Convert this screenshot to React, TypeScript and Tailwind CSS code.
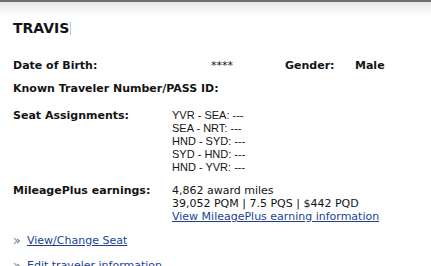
const seats = ["YVR - SEA: ---", "SEA - NRT: ---", "HND - SYD: ---", "SYD - HND: ---", "HND - YVR: ---"];

const Arrow = () => (
  <svg width="9" height="8" viewBox="0 0 9 8" className="shrink-0">
    <path d="M1 1 L4 4 L1 7" fill="none" stroke="#9a9fae" strokeWidth="1.1" />
    <path d="M4 2 L6.5 4 L4 6" fill="none" stroke="#7d8396" strokeWidth="1.1" />
  </svg>
);

export default function App() {
  return (
    <div className="w-[431px] h-[266px] overflow-hidden bg-white text-[#141414] font-['DejaVu_Sans',Verdana,sans-serif] text-[11px]">
      <div className="h-[2px] bg-[#6e6e6e]" />
      <div className="h-[13px] bg-gradient-to-b from-[#e6e6e6] to-white" />

      <div className="pl-[13px]">
        <div className="flex items-center h-[22px] mt-[2px]">
          <span className="font-bold text-[14px]">TRAVIS</span>
          <span className="ml-[1px] w-[1px] h-[13px] bg-[#c8c8c8]" />
        </div>

        <div className="flex font-bold mt-[20px] h-[13px] leading-[13px]">
          <span className="w-[198px]">Date of Birth:</span>
          <span className="w-[74px] font-normal">****</span>
          <span className="w-[70px]">Gender:</span>
          <span>Male</span>
        </div>

        <div className="font-bold mt-[10px] leading-[13px]">Known Traveler Number/PASS ID:</div>

        <div className="flex mt-[14px]">
          <span className="w-[159px] font-bold leading-[13px]">Seat Assignments:</span>
          <div className="font-['Liberation_Sans',Arial,sans-serif] text-[11px] leading-[13px]">
            {seats.map((s) => (
              <div key={s}>{s}</div>
            ))}
          </div>
        </div>

        <div className="flex mt-[10px] leading-[13px]">
          <span className="w-[159px] font-bold">MileagePlus earnings:</span>
          <div>
            <div>4,862 award miles</div>
            <div>39,052 PQM | 7.5 PQS | $442 PQD</div>
            <a href="#" className="text-[#1b3f94] underline">View MileagePlus earning information</a>
          </div>
        </div>

        <div className="flex items-center gap-[5px] mt-[11px] leading-[13px]">
          <Arrow />
          <a href="#" className="text-[#1b3f94] underline">View/Change Seat</a>
        </div>

        <div className="flex items-center gap-[5px] mt-[12px] leading-[13px]">
          <Arrow />
          <a href="#" className="text-[#1b3f94] underline">Edit traveler information</a>
        </div>
      </div>
    </div>
  );
}
